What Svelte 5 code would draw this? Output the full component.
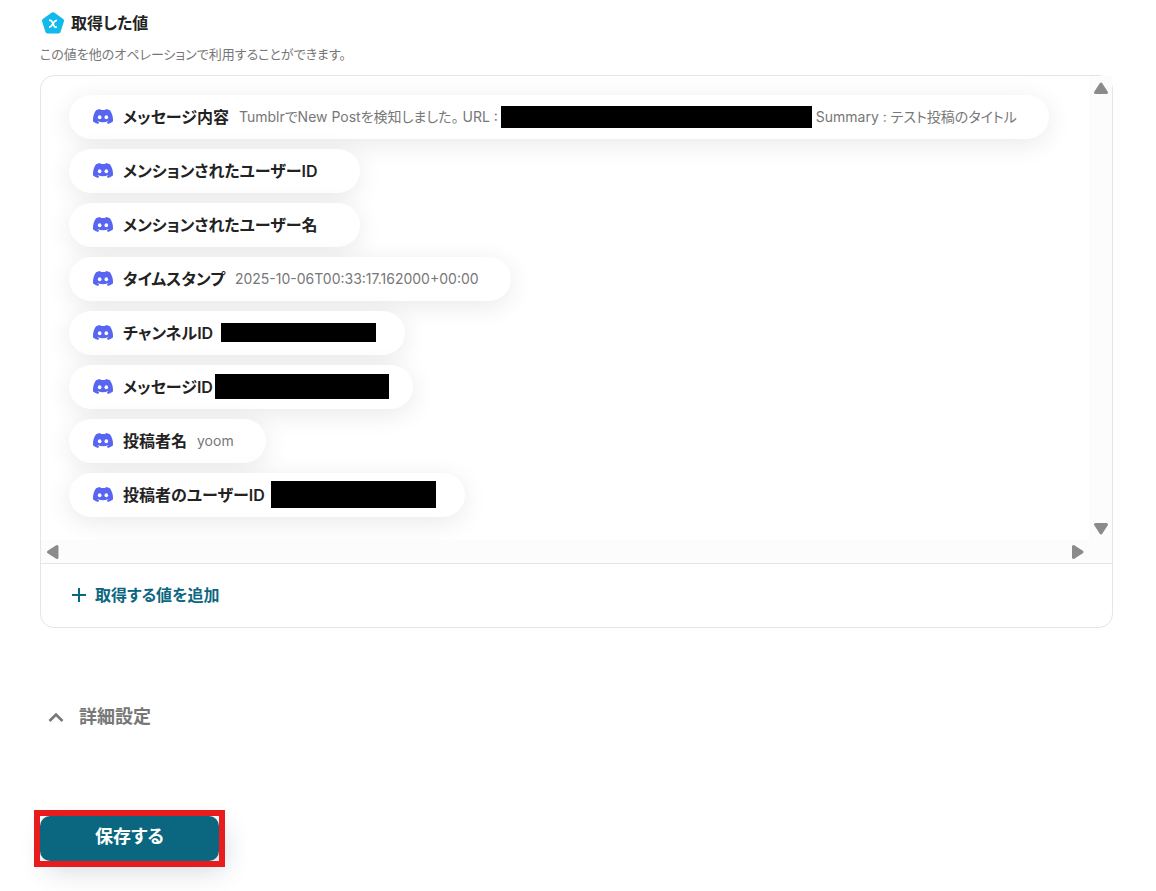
<script lang="ts">
  type Item = {
    label: string;
    value?: string;
    tail?: string;
    // Masked part of the value: slot is the space it takes in the row.
    mask?: { slot: number; width: number; height: number };
  };

  const items: Item[] = [
    {
      label: 'メッセージ内容',
      value: 'TumblrでNew Postを検知しました。 URL :',
      mask: { slot: 318, width: 311, height: 22 },
      tail: 'Summary : テスト投稿のタイトル',
    },
    { label: 'メンションされたユーザーID' },
    { label: 'メンションされたユーザー名' },
    { label: 'タイムスタンプ', value: '2025-10-06T00:33:17.162000+00:00' },
    { label: 'チャンネルID', mask: { slot: 150, width: 155, height: 19 } },
    { label: 'メッセージID', mask: { slot: 158, width: 174, height: 25 } },
    { label: '投稿者名', value: 'yoom' },
    { label: '投稿者のユーザーID', mask: { slot: 158, width: 165, height: 27 } },
  ];
</script>

<main>
  <header>
    <svg class="badge" viewBox="0 0 24 24" aria-hidden="true">
      <path
        d="M10.8 1.6a2 2 0 0 1 2.4 0l9 6.5a2 2 0 0 1 .7 2.3l-3.400 10.700a2 2 0 0 1-1.900 1.400H6.400a2 2 0 0 1-1.900-1.400L1.100 10.400a2 2 0 0 1 .7-2.300z"
        fill="#12b9eb"
      />
      <path
        d="M8 9.300h1.500c.6 0 .9.300 1.200.800l2.600 5.200c.3.600.6.900 1.200.900h1.300M16 9.300c-1.200 0-1.700.3-2.500 1.300l-3 4.200c-.8 1.100-1.300 1.400-2.500 1.400"
        fill="none"
        stroke="#fff"
        stroke-width="1.700"
      />
    </svg>
    <h2>取得した値</h2>
  </header>
  <p class="hint">この値を他のオペレーションで利用することができます。</p>

  <section class="panel">
    <div class="scroll">
      <ul>
        {#each items as item}
          <li>
            <svg class="discord" viewBox="0 0 24 18" aria-hidden="true">
              <path
                fill="#5865f2"
                d="M20.317 1.492a19.800 19.800 0 0 0-4.885-1.490.074.074 0 0 0-.079.036c-.21.369-.444.850-.608 1.230a18.566 18.566 0 0 0-5.487 0A12.360 12.360 0 0 0 8.641.038.077.077 0 0 0 8.562 0c-1.714.290-3.354.800-4.885 1.491a.070.070 0 0 0-.032.027C.533 6.093-.320 10.555.099 14.961a.080.080 0 0 0 .031.055 20.030 20.030 0 0 0 5.993 2.980.078.078 0 0 0 .084-.026c.462-.620.874-1.275 1.226-1.963.021-.040.001-.088-.041-.104a13.201 13.201 0 0 1-1.872-.878.075.075 0 0 1-.008-.125c.126-.093.252-.190.372-.287a.075.075 0 0 1 .078-.010c3.927 1.764 8.180 1.764 12.061 0a.075.075 0 0 1 .079.009c.120.098.245.195.372.288a.075.075 0 0 1-.006.125c-.598.344-1.220.635-1.873.877a.075.075 0 0 0-.041.105c.360.687.772 1.341 1.225 1.962a.077.077 0 0 0 .084.028 19.963 19.963 0 0 0 6.002-2.981.076.076 0 0 0 .032-.054c.500-5.094-.838-9.520-3.549-13.442a.060.060 0 0 0-.031-.028z"
              />
              <ellipse cx="8.020" cy="9.900" rx="2.160" ry="2.380" fill="#fff" />
              <ellipse cx="15.990" cy="9.900" rx="2.160" ry="2.380" fill="#fff" />
            </svg>
            <span class="label">{item.label}</span>
            <span class="value">
              {item.value ?? ''}
              {#if item.mask}
                <span class="slot" style="width: {item.mask.slot}px">
                  <span
                    class="mask"
                    style="width: {item.mask.width}px; height: {item.mask.height}px"
                  ></span>
                </span>
              {/if}
              {item.tail ?? ''}
            </span>
          </li>
        {/each}
      </ul>
      <div class="track vertical">
        <svg width="16" height="14" viewBox="0 0 16 14" aria-hidden="true">
          <path d="M8 3 13.500 11.500h-11z" />
        </svg>
        <svg width="16" height="14" viewBox="0 0 16 14" aria-hidden="true">
          <path d="M8 11 2.500 2.500h11z" />
        </svg>
      </div>
      <div class="track horizontal">
        <svg width="14" height="16" viewBox="0 0 14 16" aria-hidden="true">
          <path d="M2.500 8 11 2.500v11z" />
        </svg>
        <svg width="14" height="16" viewBox="0 0 14 16" aria-hidden="true">
          <path d="M12 8 3.500 13.500v-11z" />
        </svg>
      </div>
    </div>
    <div class="footer">
      <button class="add" type="button">
        <svg width="16" height="16" viewBox="0 0 16 16" aria-hidden="true">
          <path d="M8 1v14M1 8h14" stroke="currentColor" stroke-width="2" />
        </svg>
        取得する値を追加
      </button>
    </div>
  </section>

  <button class="details" type="button">
    <svg width="16" height="16" viewBox="0 0 16 16" aria-hidden="true">
      <path d="M1.500 12 8 5.500l6.500 6.500" fill="none" stroke="currentColor" stroke-width="2.600" />
    </svg>
    詳細設定
  </button>

  <div class="highlight">
    <button class="save" type="button">保存する</button>
  </div>
</main>

<style>
  :global(body) {
    background: #fff;
  }
  main {
    padding: 11px 43px 30px 40px;
    font-family: Inter, "Noto Sans CJK JP", sans-serif;
    font-feature-settings: "palt";
    color: #222;
  }
  header {
    display: flex;
    align-items: center;
    gap: 6px;
    height: 24px;
    padding-left: 1px;
  }
  .badge {
    width: 24px;
    height: 24px;
  }
  h2 {
    margin: 0;
    font-size: 16px;
    line-height: 24px;
    font-weight: 600;
  }
  .hint {
    margin: 9px 0 11px;
    font-size: 13px;
    line-height: 20px;
    color: #777;
  }
  .panel {
    border: 1px solid #e5e5e5;
    border-radius: 14px;
  }
  .scroll {
    display: grid;
    grid-template-columns: 1fr 23px;
    grid-template-rows: auto 23px;
    border-bottom: 1px solid #e5e5e5;
  }
  ul {
    display: flex;
    flex-direction: column;
    align-items: flex-start;
    gap: 10px;
    min-width: 0;
    margin: 0;
    padding: 19px 28px 23px;
    overflow: hidden;
    border-top-left-radius: 13px;
    list-style: none;
  }
  li {
    display: flex;
    align-items: center;
    gap: 10px;
    height: 44px;
    box-sizing: border-box;
    padding: 0 32px 1px 24px;
    border-radius: 22px;
    background: #fff;
    box-shadow: 0 5px 26px rgba(0, 0, 0, 0.09);
    white-space: nowrap;
  }
  .discord {
    width: 20px;
    height: 15px;
  }
  .label {
    font-size: 16px;
    line-height: 24px;
    font-weight: 600;
  }
  .value {
    display: flex;
    align-items: center;
    font-size: 14px;
    line-height: 20px;
    color: #777;
  }
  .slot {
    display: flex;
    justify-content: center;
  }
  .mask {
    flex: none;
    background: #000;
  }
  .track {
    display: flex;
    align-items: center;
    justify-content: space-between;
    background: #fcfcfc;
  }
  .track path {
    fill: #8b8b8b;
    stroke: #8b8b8b;
    stroke-width: 3;
    stroke-linejoin: round;
  }
  .vertical {
    flex-direction: column;
    padding: 5px 0 4px;
  }
  .horizontal {
    grid-column: 1 / -1;
    padding: 0 28px 0 5px;
  }
  .footer {
    padding: 19px 30px 20px;
  }
  button {
    border: 0;
    font: inherit;
    font-feature-settings: inherit;
    cursor: pointer;
  }
  .add,
  .details {
    display: flex;
    align-items: center;
    gap: 8px;
    padding: 0;
    background: none;
    font-size: 16px;
    line-height: 24px;
    font-weight: 600;
  }
  .add {
    color: #0b6681;
  }
  .details {
    gap: 15px;
    margin: 77px 0 0 8px;
    font-size: 18px;
    color: #777;
  }
  .highlight {
    width: 179px;
    margin-top: 87px;
    outline: 6px solid #e81c1c;
  }
  .save {
    display: block;
    width: 100%;
    height: 45px;
    padding: 0 0 3px;
    border-radius: 10px;
    background: #0b6780;
    box-shadow: 6px 10px 26px rgba(30, 50, 90, 0.18);
    color: #fff;
    font-size: 18px;
    line-height: 24px;
    font-weight: 700;
  }
</style>
